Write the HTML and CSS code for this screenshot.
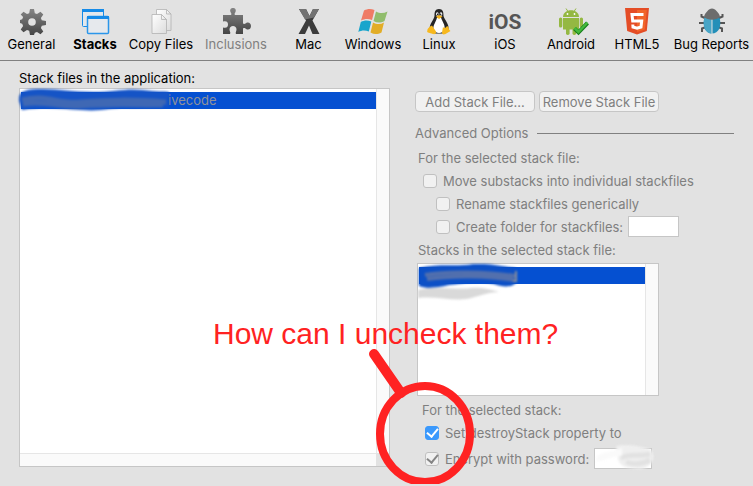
FILE: index.html
```html
<!DOCTYPE html>
<html lang="en">
<head>
    <meta charset="UTF-8">
    <meta name="viewport" content="width=device-width, initial-scale=1.0">
    <title>Standalone Application Settings</title>
    <link rel="stylesheet" href="styles.css">
</head>
<body>
    <nav class="toolbar">
        <button type="button" class="tab">
            <svg class="icon" viewBox="0 0 28 28">
                <defs>
                    <linearGradient id="gear" x1="0" y1="0" x2="0" y2="1">
                        <stop offset="0" stop-color="#858585"/>
                        <stop offset="1" stop-color="#454545"/>
                    </linearGradient>
                </defs>
                <g fill="url(#gear)">
                    <path fill-rule="evenodd" d="M12 1h4l.8 4.200 2.200.9L22.500 3.700l2.800 2.800L22.900 10l.9 2.200 4.200.8v4l-4.200.8-.9 2.200 2.400 3.500-2.800 2.800-3.500-2.400-2.200.9L16 27h-4l-.8-4.200-2.200-.9-3.500 2.400-2.800-2.800L5.100 18l-.9-2.200L2 15v-3l2.200-.8.9-2.200L2.700 6.500l2.800-2.800L9 6.100l2.200-.9zM14 10.200a3.800 3.800 0 1 0 0 7.600 3.800 3.800 0 0 0 0-7.600z"/>
                </g>
            </svg>
            <span>General</span>
        </button>
        <button type="button" class="tab active">
            <svg class="icon" viewBox="0 0 28 28">
                <rect x="1.500" y="1.500" width="21" height="17" rx="1" fill="#e4e8ec" stroke="#168be8"/>
                <path d="M1 1h22v3H1z" fill="#168be8"/>
                <rect x="6.500" y="8.500" width="21" height="17" rx="1" fill="#e6e9ed" stroke="#2b96ea" stroke-width="1.500"/>
                <path d="M6 8h22v3H6z" fill="#168be8"/>
            </svg>
            <span>Stacks</span>
        </button>
        <button type="button" class="tab">
            <svg class="icon" viewBox="0 0 28 28">
                <defs>
                    <linearGradient id="paper" x1="0" y1="0" x2="1" y2="1">
                        <stop offset="0" stop-color="#fff"/>
                        <stop offset="1" stop-color="#dcdcdc"/>
                    </linearGradient>
                </defs>
                <g fill="url(#paper)" stroke="#b2b2b2" stroke-width=".8">
                    <path d="M9.500 1.500h10L24 6v16.500H9.500z"/>
                    <path d="M19.500 1.500V6H24z"/>
                    <path d="M5 6.500h9.500l5 5v14H5z"/>
                    <path d="M14.500 6.500v5h5z"/>
                </g>
            </svg>
            <span>Copy Files</span>
        </button>
        <button type="button" class="tab" disabled>
            <svg class="icon" viewBox="0 0 28 28">
                <path fill="url(#gear)" d="M1 7h8c1-1 0-2-.5-3C7.500 1.500 9 0 11 0s3.500 1.500 2.500 4c-.5 1-1.500 2-.5 3h8v8.500c1.500 1 2.500 0 3.500-.7 2-1 4.500.2 4.500 3.200s-2.500 4.200-4.500 3.200c-1-.7-2-1.700-3.500-.7V26h-7c-1-1.500.5-2.500.5-4.500 0-2.200-1.500-3.500-3.500-3.500s-3.500 1.300-3.500 3.500c0 2 1.500 3 .5 4.500H1v-6.500c4 1 5-1 5-3s-1-4-5-3z"/>
            </svg>
            <span>Inclusions</span>
        </button>
        <button type="button" class="tab">
            <svg class="icon" viewBox="0 0 28 28">
                <path d="M4 1h7l3.500 7L18 1h6l-6.500 11.500L24.500 26h-7L14 17.500 10 26H3.500L11 12.500z" fill="#3c3c3c"/>
                <path d="M4 1h7l3.500 7L18 1h6l-5 8.500-9 2z" fill="#727272"/>
            </svg>
            <span>Mac</span>
        </button>
        <button type="button" class="tab">
            <svg class="icon" viewBox="0 0 28 28">
                <path d="M5 2.500C8.500.500 12 .5 15.500 2L13 12c-3.500-1.500-7-1.500-11 .5z" fill="#ef7b65"/>
                <path d="M17 3.500c4 2 7.500 2 11.500 0L25.500 13c-4 2-7.500 2-11 0z" fill="#91bd6c"/>
                <path d="M1.800 14c3.500-2 7-2 10.500-.5l-2.500 10c-3.500-1.500-7-1.500-10.500.5z" fill="#18a5cc"/>
                <path d="M14 14.500c4 2 7.500 2 11 0l-2.500 10c-4 2-7.500 2-11 0z" fill="#e2ad27"/>
            </svg>
            <span>Windows</span>
        </button>
        <button type="button" class="tab">
            <svg class="icon" viewBox="0 0 28 28">
                <path d="M14 1c4 0 4.500 3 4.500 7 1 4 6 7.500 5 14.500l-5 3h-9l-5-4c0-6 4-9 5-13.500C9.500 4 10 1 14 1z" fill="#252525"/>
                <path d="M12 9.500h4c1 4 4.500 7 3.500 12-1 4.500-10 4.500-11 0-.8-4.500 2.500-7 3.500-12z" fill="#fff"/>
                <ellipse cx="12.300" cy="6" rx="1.300" ry="1.800" fill="#fff"/>
                <ellipse cx="16" cy="6" rx="1.300" ry="1.800" fill="#fff"/>
                <circle cx="12.600" cy="6.300" r=".7"/>
                <circle cx="15.700" cy="6.300" r=".7"/>
                <path d="M11 8.500l3-1.500 3.500 1.500L14 11z" fill="#f5b51e"/>
                <path d="M5 18.500l2-1 4 6c.5 2-1 3-3 2.500l-5-1.500c-1.500-.6-.5-1.500-.4-3.500z" fill="#f7b81d"/>
                <path d="M18 19c1 1.500 3 1 4-1l1.500 1 .5 2.500 1.500 1.500-5 3c-2 1-3.500.5-3.500-1.500z" fill="#f7b81d"/>
            </svg>
            <span>Linux</span>
        </button>
        <button type="button" class="tab">
            <span class="icon ios-logo">iOS</span>
            <span>iOS</span>
        </button>
        <button type="button" class="tab">
            <svg class="icon" viewBox="0 0 28 28">
                <g fill="#94b842">
                    <path d="M6 9c0-9 16-9 16 0z"/>
                    <path d="M6 10h16v11.500H6z"/>
                    <rect x="2" y="9.500" width="3.300" height="10" rx="1.600"/>
                    <rect x="22.700" y="9.500" width="3.300" height="10" rx="1.600"/>
                    <rect x="9" y="19" width="3.600" height="8" rx="1.700"/>
                    <rect x="15.500" y="19" width="3.600" height="8" rx="1.700"/>
                    <path d="M9 .5l2 3M19 .5l-2 3" stroke="#94b842"/>
                </g>
                <circle cx="10.500" cy="6" r=".9" fill="#fff"/>
                <circle cx="17.500" cy="6" r=".9" fill="#fff"/>
                <path d="M17.500 20.500l4 4 9-9.500" fill="none" stroke="#177e1c" stroke-width="4"/>
                <path d="M17.500 20l4 4 9-9.500" fill="none" stroke="#43b93c" stroke-width="2.500"/>
            </svg>
            <span>Android</span>
        </button>
        <button type="button" class="tab">
            <svg class="icon" viewBox="0 0 28 28">
                <path d="M2 0h24l-2.200 23L14 26.500 4.200 23z" fill="#e44d26"/>
                <path d="M14 2h9.800l-1.900 19.500L14 24z" fill="#f16529"/>
                <path d="M20.500 6.500H9l.7 6.500h9l-.7 6-4 1.200-4-1.200-.2-2.500" fill="none" stroke="#fff" stroke-width="3"/>
            </svg>
            <span>HTML5</span>
        </button>
        <button type="button" class="tab">
            <svg class="icon" viewBox="0 0 28 28">
                <path d="M8 10.500L3.500 8.500V6M20 10.500l4.500-2V6M8 15H1M20 15h7M8 19l-4 1.500V24M20 19l4 1.500V24" fill="none" stroke="#555" stroke-width="2"/>
                <path d="M6.500 9.500h15c2.500 9-1 16-7.500 16s-10-7-7.500-16z" fill="#238fb8"/>
                <path d="M6.500 9.500H14v16c-6.500 0-10-7-7.500-16z" fill="#48a5c6"/>
                <path d="M14 9v17" stroke="#e2e2e2"/>
                <path d="M6 9c.5-3 2-4.500 3.500-6 2-3.500 7-3.500 9 0C20 4.500 21.500 6 22 9c-4 3.500-12 3.500-16 0z" fill="#6c6c6c"/>
            </svg>
            <span>Bug Reports</span>
        </button>
    </nav>

    <main class="settings">
        <section class="files">
            <h2 class="list-title">Stack files in the application:</h2>
            <div class="list file-list">
                <ul class="rows">
                    <li class="row selected">ivecode
                        <svg class="smear" viewBox="0 0 160 28">
                            <path d="M0 13C-1 3 6 1 24 1c18 0 28 3 50 3 22 0 32-4 50-2 14 2 20 1 26 2v15c-14 0-22 1-38 1-18-1-28 4-50 2C42 21 28 18 3 22z" fill="#1554c6"/>
                            <path d="M3 12c25-6 35 4 58 2 28-2 50-3 86 0M4 16c24-4 36 4 58 2 32-3 52-1 82-1" fill="none" stroke="#3f68b4" stroke-width="5"/>
                        </svg>
                    </li>
                </ul>
                <div class="scroll-y"></div>
                <div class="scroll-x"></div>
                <div class="corner"></div>
            </div>
        </section>

        <section class="options">
            <div class="buttons">
                <button type="button" class="push" disabled>Add Stack File...</button>
                <button type="button" class="push" disabled>Remove Stack File</button>
            </div>
            <h2 class="divider">Advanced Options</h2>
            <h3 class="line">For the selected stack file:</h3>
            <label class="line check"><input type="checkbox" disabled>Move substacks into individual stackfiles</label>
            <label class="line check nested"><input type="checkbox" disabled>Rename stackfiles generically</label>
            <div class="line nested">
                <label class="check"><input type="checkbox" disabled>Create folder for stackfiles:</label>
                <input type="text" class="field" aria-label="Folder name" disabled>
            </div>
            <h3 class="line">Stacks in the selected stack file:</h3>
            <div class="list stack-list">
                <ul class="rows">
                    <li class="row selected">
                        <svg class="smear small" viewBox="0 0 110 40">
                            <path d="M1 4C22-1 38 3 55 0c14-1 26 2 43 4v15c-5 5-14 4-22 1-18-4-30 0-45 1C18 24 8 25 1 22z" fill="#0c50c6"/>
                            <path d="M7 11c22-4 62-3 90 1M9 15c26-4 62-3 87 1" fill="none" stroke="#5370ad" stroke-width="4"/>
                            <path d="M98 7v10h-3" fill="none" stroke="#8a8f9c" stroke-width="2"/>
                            <path d="M0 26c18-5 37 0 53-2 10-1 18 1 28 4-12 0-21 5-33 7-14 2-30-3-48-1z" fill="#d9d9d9"/>
                        </svg>
                    </li>
                </ul>
                <div class="scroll-y"></div>
            </div>
            <div class="stack-options">
                <h3 class="line">For the selected stack:</h3>
                <label class="line check"><input type="checkbox" class="on" checked>Set destroyStack property to</label>
                <div class="line password">
                    <label class="check"><input type="checkbox" checked disabled>Encrypt with password:</label>
                    <div class="field-wrap">
                        <input type="text" class="field wide" aria-label="Password" disabled>
                        <svg class="smear cover" viewBox="0 0 64 28">
                            <path d="M22 1c14-3 25 1 34 3 4 4 4 9 2 13-5 8-13 8-22 6-8-1-12-5-12-10z" fill="#efefef"/>
                            <path d="M27 13c9-5 18-1 29-4M32 17c9 3 17 2 24-2" fill="none" stroke="#e2e2e2" stroke-width="5"/>
                            <path d="M2 12c9-6 17-5 26-9v8c-8 0-15 3-25 6z" fill="#fafafa"/>
                        </svg>
                    </div>
                </div>
            </div>
        </section>
    </main>

    <div class="note">
        <p>How can I uncheck them?</p>
        <svg class="pointer" viewBox="0 0 110 140">
            <path d="M9 9l27 39" stroke-linecap="round" stroke-width="10"/>
            <ellipse cx="60" cy="89" rx="45" ry="48" stroke-width="8"/>
        </svg>
    </div>
</body>
</html>
```
FILE: styles.css
```css
:root {
    --bg-color: #e2e2e2;
    --text-color: #000;
    --muted-color: #7f7f7f;
    --border-color: #c6c6c6;
    --select-color: #0550d1;
    --note-color: #ff2222;
}

* {
    margin: 0;
    padding: 0;
    box-sizing: border-box;
}

body {
    font-family: Inter, Roboto, "Liberation Sans", sans-serif;
    font-size: 13px;
    line-height: 16px;
    color: var(--text-color);
    background: var(--bg-color);
    position: relative;
    overflow-x: hidden;
}

h2, h3 {
    font-size: 13px;
    font-weight: 400;
}

/* Toolbar */
.toolbar {
    display: grid;
    grid-template-columns: 63fr 64fr 68fr 82fr 63fr 66fr 66fr 66fr 66fr 66fr 83fr;
    padding: 8px 0;
    border-bottom: 1px solid #808080;
}

.tab {
    display: flex;
    flex-direction: column;
    align-items: center;
    min-width: 0;
    border: none;
    background: none;
    font: inherit;
    color: inherit;
    white-space: nowrap;
}

.tab.active {
    font-weight: 700;
}

.tab:disabled {
    color: var(--muted-color);
}

.icon {
    width: 28px;
    height: 28px;
    overflow: visible;
}

.ios-logo {
    display: flex;
    justify-content: center;
    align-items: center;
    font-family: Roboto, sans-serif;
    font-size: 21px;
    font-weight: 700;
    color: #555;
}

/* Panels */
.settings {
    display: grid;
    grid-template-columns: 371fr 319fr;
    gap: 25px;
    padding: 9px 19px 14px;
}

.files {
    display: flex;
    flex-direction: column;
    padding-bottom: 3px;
}

.list-title {
    margin-bottom: 2px;
}

.list {
    display: grid;
    grid-template-columns: 1fr 13px;
    background: #fff;
    border: 1px solid var(--border-color);
}

.file-list {
    flex: 1;
    grid-template-rows: 1fr 13px;
}

.rows {
    list-style: none;
    padding: 3px 0 0 1px;
}

.row {
    position: relative;
    height: 17px;
    line-height: 17px;
    padding-left: 147px;
}

.row.selected {
    background: var(--select-color);
    color: #8f929b;
}

.scroll-y {
    background: #fafafa;
    border-left: 1px solid #e6e6e6;
}

.scroll-x {
    background: #fafafa;
    border-top: 1px solid #e6e6e6;
}

.corner {
    background: var(--bg-color);
}

.smear {
    position: absolute;
    left: -2px;
    top: -4px;
    width: 160px;
    height: 28px;
    filter: blur(1px);
}

.smear.small {
    left: -1px;
    top: -3px;
    width: 110px;
    height: 40px;
}

/* Options */
.options {
    color: var(--muted-color);
    padding-top: 21px;
}

.buttons {
    display: flex;
    gap: 4px;
    margin-bottom: 8px;
}

.push {
    width: 120px;
    height: 21px;
    border: 1px solid var(--border-color);
    border-radius: 4px;
    background: #f1f1f1;
    font: inherit;
    color: var(--muted-color);
    white-space: nowrap;
}

.divider {
    display: flex;
    align-items: center;
    gap: 9px;
    height: 26px;
}

.divider::after {
    content: "";
    flex: 1;
    height: 1px;
    background: #808080;
}

.line {
    display: flex;
    align-items: center;
    height: 23px;
    padding-left: 3px;
    white-space: nowrap;
}

.check {
    display: flex;
    align-items: center;
    gap: 6px;
}

.line.check {
    padding-left: 8px;
}

.line.nested {
    padding-left: 21px;
}

input[type="checkbox"] {
    appearance: none;
    display: grid;
    place-items: center;
    width: 14px;
    height: 14px;
    border: 1px solid #c0c0c0;
    border-radius: 3px;
    background: #f1f1f1;
    color: #858585;
}

input[type="checkbox"]:checked::before {
    content: "";
    width: 9px;
    height: 5px;
    border-left: 2px solid;
    border-bottom: 2px solid;
    transform: translateY(-1px) rotate(-50deg);
}

input[type="checkbox"].on {
    border-color: #3b99fc;
    background: #3b99fc;
    color: #fff;
}

.field {
    display: block;
    width: 51px;
    height: 21px;
    margin-left: 5px;
    border: 1px solid var(--border-color);
    background: #fff;
}

.stack-list {
    width: 242px;
    height: 133px;
    margin: 2px 0 0 2px;
}

.stack-options {
    padding: 2px 0 0 2px;
}

.stack-options .line {
    padding-left: 5px;
}

.stack-options .line.check,
.stack-options .password {
    padding-left: 8px;
}

.password {
    padding-top: 3px;
    height: 26px;
}

.field-wrap {
    position: relative;
}

.field.wide {
    width: 58px;
}

.smear.cover {
    left: 5px;
    top: -3px;
    width: 64px;
    height: 28px;
}

/* Annotation drawn over the window */
.note {
    position: absolute;
    left: 213px;
    top: 316px;
    color: var(--note-color);
}

.note p {
    font-family: "Liberation Sans", Arial, sans-serif;
    font-size: 30px;
    line-height: 36px;
    white-space: nowrap;
}

.pointer {
    position: absolute;
    left: 152px;
    top: 29px;
    width: 110px;
    height: 140px;
    fill: none;
    stroke: var(--note-color);
}
```
